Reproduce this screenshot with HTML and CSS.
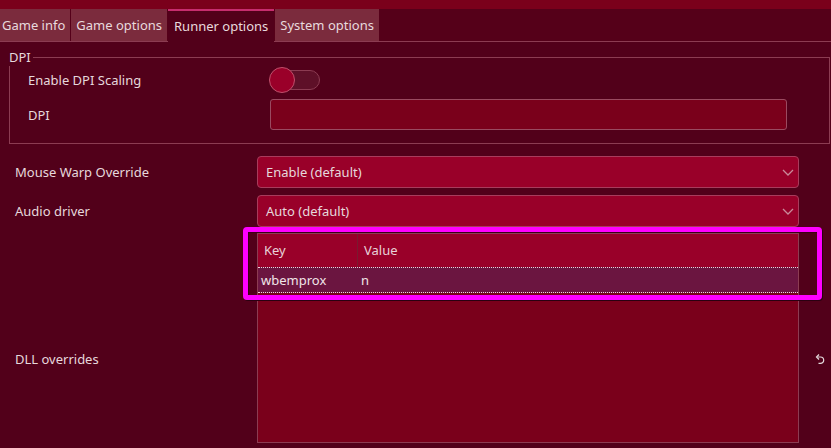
FILE: index.html
```html
<!DOCTYPE html>
<html>
<head>
<meta charset="utf-8">
<link rel="stylesheet" href="styles.css">
</head>
<body>
<div class="window">
  <div class="topstrip"></div>
  <div class="tabbar">
    <div class="tab first">Game info</div>
    <div class="tab">Game options</div>
    <div class="tab active">Runner options</div>
    <div class="tab">System options</div>
  </div>
  <div class="content">
    <fieldset class="group">
      <legend class="group-title">DPI</legend>
      <div class="group-grid">
        <div class="label">Enable DPI Scaling</div>
        <div class="toggle"><div class="track"></div><div class="knob"></div></div>
        <div class="label">DPI</div>
        <div class="input"></div>
      </div>
    </fieldset>
    <div class="form">
      <div class="label">Mouse Warp Override</div>
      <div class="select"><span>Enable (default)</span>
        <svg class="chev" width="12" height="7" viewBox="0 0 12 7"><path d="M1 1 L6 6 L11 1" fill="none" stroke="#c98a9a" stroke-width="1.3"/></svg>
      </div>
      <div class="side"></div>

      <div class="label">Audio driver</div>
      <div class="select"><span>Auto (default)</span>
        <svg class="chev" width="12" height="7" viewBox="0 0 12 7"><path d="M1 1 L6 6 L11 1" fill="none" stroke="#c98a9a" stroke-width="1.3"/></svg>
      </div>
      <div class="side"></div>

      <div class="label">DLL overrides</div>
      <div class="tablecell">
        <div class="table">
          <div class="thead">
            <div class="th key">Key</div>
            <div class="th">Value</div>
          </div>
          <div class="trow">
            <div class="td key">wbemprox</div>
            <div class="td">n</div>
          </div>
        </div>
      </div>
      <div class="side">
        <svg class="undo" width="11" height="12" viewBox="0 0 11 12"><path d="M3.5 4 H6.5 A3.2 3.2 0 0 1 6.5 10.4 H4.5" fill="none" stroke="#e4dadd" stroke-width="1.2"/><path d="M5 1.5 L2.5 4 L5 6.5" fill="none" stroke="#e4dadd" stroke-width="1.2"/></svg>
      </div>
    </div>
  </div>
  <div class="highlight"></div>
</div>
</body>
</html>
```
FILE: styles.css
```css
html, body {
  margin: 0;
  padding: 0;
}
body {
  background: #52001a;
  font-family: "Noto Sans", "DejaVu Sans", sans-serif;
  font-size: 13px;
  color: #e6d8dc;
  overflow: hidden;
}
.window {
  position: relative;
  width: 831px;
  height: 448px;
  overflow: hidden;
}
.topstrip {
  height: 9px;
  background: #7a001b;
}
.tabbar {
  display: flex;
  height: 32px;
  background: #550019;
  border-bottom: 1px solid #8c3c52;
}
.tab {
  padding: 0 5px;
  line-height: 32px;
  background: #7b2b3d;
  color: #e8dadd;
  margin-right: 1px;
  white-space: nowrap;
}
.tab.first {
  margin-left: -4px;
  padding-left: 6px;
}
.tab.active {
  background: #52001a;
  border-top: 2px solid #c62d6e;
  line-height: 30px;
  height: 31px;
  margin-bottom: -1px;
  padding: 0 6px;
}
.content {
  display: flex;
  flex-direction: column;
}
.group {
  margin: 6px 1px 0 9px;
  padding: 1px 42px 13px 18px;
  border: 1px solid #8c3c52;
  min-width: 0;
}
.group-title {
  padding: 0 2px 0 0;
  margin-left: -19px;
  line-height: 18px;
  color: #e6d8dc;
}
.group-grid {
  display: grid;
  grid-template-columns: 241px 1fr;
  row-gap: 6px;
  align-items: center;
}
.label {
  white-space: nowrap;
}
.toggle {
  position: relative;
  width: 52px;
  height: 26px;
}
.track {
  position: absolute;
  left: 12px;
  top: 3px;
  width: 37px;
  height: 18px;
  border-radius: 10px;
  background: #5e1028;
  border: 1px solid #8c3c52;
}
.knob {
  position: absolute;
  left: 0;
  top: 0;
  width: 24px;
  height: 24px;
  border-radius: 50%;
  background: #9a0029;
  border: 1px solid #c0506c;
}
.input {
  height: 29px;
  background: #7a001b;
  border: 1px solid #9a4a60;
  border-radius: 3px;
  margin-left: 1px;
}
.form {
  display: grid;
  grid-template-columns: 242px 542px 32px;
  grid-template-rows: 32px 32px 250px;
  row-gap: 7px;
  margin-top: 12px;
  padding-left: 15px;
  align-items: center;
}
.select {
  height: 30px;
  background: #990029;
  border: 1px solid #a83c5c;
  border-radius: 4px;
  display: flex;
  align-items: center;
  justify-content: space-between;
  padding: 0 4px 0 8px;
}
.chev {
  display: block;
}
.tablecell {
  align-self: stretch;
  margin-top: -1px;
}
.table {
  height: 208px;
  background: #7a001b;
  border: 1px solid #8c3c52;
}
.thead {
  display: flex;
  height: 33px;
  background: #990029;
}
.th {
  padding-left: 6px;
  line-height: 33px;
  color: #e8d2d8;
}
.th.key {
  width: 93px;
  border-right: 1px solid #7a1a30;
}
.trow {
  display: flex;
  height: 24px;
  background: #6b1540;
  border-top: 1px dotted #f0d4dc;
  border-bottom: 1px dotted #f0d4dc;
}
.td {
  padding-left: 3px;
  line-height: 24px;
  color: #f0e4e8;
}
.td.key {
  width: 97px;
}
.side {
  padding-left: 15px;
  display: flex;
  align-items: center;
}
.undo {
  display: block;
}
.highlight {
  position: absolute;
  left: 243px;
  top: 227px;
  width: 569px;
  height: 63px;
  border: 5px solid #ff00ff;
  border-radius: 4px;
  box-shadow: 1px 1px 0 #2a0010, inset 1px 1px 0 #3a0014;
}
```
